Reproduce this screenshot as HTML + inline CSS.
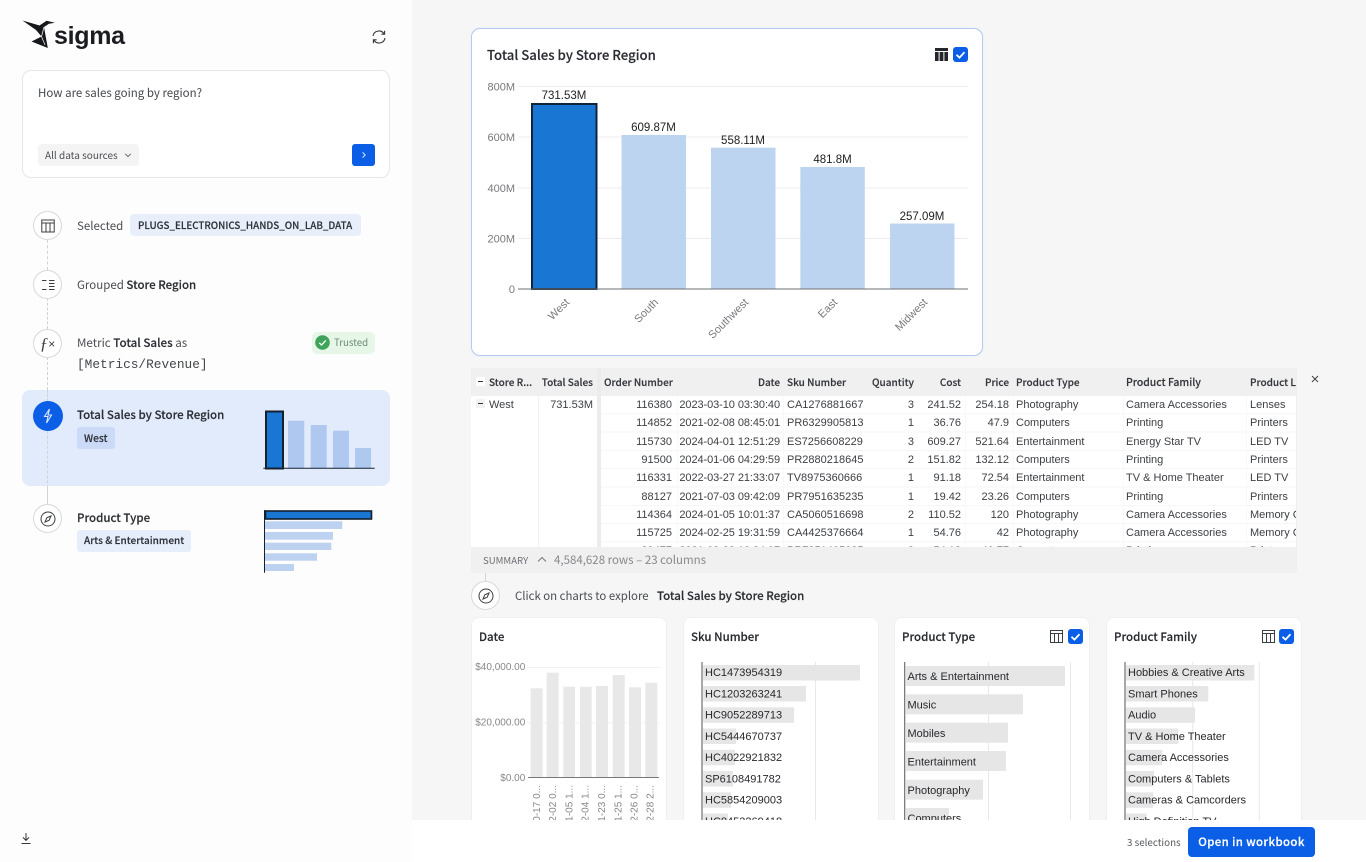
<!DOCTYPE html>
<html><head><meta charset="utf-8"><style>
*{box-sizing:border-box}
html,body{margin:0;padding:0;width:1366px;height:862px;overflow:hidden;background:#f6f6f6}
body{position:relative;font-family:"Noto Sans CJK JP","Liberation Sans",sans-serif;color:#3a3d42}
.a,.t,.r{position:absolute}
.t,.r{white-space:nowrap;line-height:16px}
.r{text-align:right}
.c{position:absolute;border-radius:50%;background:#fff;border:1px solid #d9d9d9;display:flex;align-items:center;justify-content:center}
.d{position:absolute;left:47px;width:0;border-left:1px dashed #d2d2d2}
b,.m{font-weight:500;color:#2a2d32;-webkit-text-stroke:.15px currentColor}
.tb .t,.tb .r{font-family:"Liberation Sans",sans-serif;font-size:11px;color:#3c3f44}
.tb .th{font-size:10px;font-weight:500;font-family:"Noto Sans CJK JP",sans-serif;color:#33363b;-webkit-text-stroke:.15px currentColor}
.tb .dt{letter-spacing:-.08px}
.card{position:absolute;background:#fff;border-radius:8px;top:617px;height:240px;border:1px solid #f0f0f0;overflow:hidden}
.h{font-size:11.5px;font-weight:500;color:#26292e;-webkit-text-stroke:.15px currentColor}
.v{position:absolute;top:396px;width:1px;height:151px;background:#f8f8f8}
</style></head><body>

<!-- sidebar -->
<div class="a" style="left:0;top:0;width:412px;height:862px;background:#fdfdfd"></div>
<svg class="a" style="left:0;top:0" width="60" height="60" viewBox="0 0 60 60"><path d="M22.5 20.5L39.5 25.5 46.5 20.8 55 22.8 49 23.8 44 27 47.8 48 31.5 41.5 41.5 36.5 36 30Z" fill="#17181c"/><path d="M44 27L41.5 36.5 45 45" stroke="#fff" stroke-width=".7" fill="none"/></svg>
<div class="t" style="left:54px;top:20px;font-family:'Liberation Sans',sans-serif;font-size:25px;line-height:32px;font-weight:700;color:#1c1d21;letter-spacing:-.3px">sigma</div>
<svg class="a" style="left:371px;top:29px" width="16" height="16" viewBox="0 0 16 16" fill="none" stroke="#33363b" stroke-width="1.1"><path d="M2 7A6 6 0 0 1 13 4.8"/><path d="M14 9A6 6 0 0 1 3 11.2"/><path d="M13.6 1.8V5.2H10.4"/><path d="M2.4 14.2V10.8H5.6"/></svg>

<div class="a" style="left:22px;top:70px;width:368px;height:108px;background:#fff;border:1px solid #e6e6e6;border-radius:9px"></div>
<div class="t" style="left:38px;top:84.5px;font-size:11.5px;color:#44474c">How are sales going by region?</div>
<div class="a" style="left:38px;top:144px;width:101px;height:22px;background:#f4f4f4;border-radius:4px"></div>
<div class="t" style="left:45px;top:147px;font-size:10px;color:#4a4d52">All data sources</div>
<svg class="a" style="left:124px;top:152px" width="8" height="7" viewBox="0 0 8 7" fill="none" stroke="#666" stroke-width="1"><path d="M1.2 1.8L4 4.6 6.8 1.8"/></svg>
<div class="a" style="left:352px;top:144px;width:23px;height:22px;background:#0a5fe6;border-radius:3px"></div>
<svg class="a" style="left:360px;top:151px" width="8" height="8" viewBox="0 0 8 8" fill="none" stroke="#d9e6ff" stroke-width="1"><path d="M2.6 1.4L5.2 4 2.6 6.6"/></svg>

<div class="d" style="top:240px;height:30px"></div>
<div class="d" style="top:298px;height:31px"></div>
<div class="d" style="top:357px;height:148px"></div>

<div class="c" style="left:33px;top:211px;width:29px;height:29px"><svg width="14" height="14" viewBox="0 0 14 14" fill="none" stroke="#3a3d42" stroke-width="1"><rect x=".8" y="1" width="12.4" height="12"/><path d="M.8 4H13.2M5 4V13M9 4V13"/></svg></div>
<div class="t" style="left:77px;top:217.5px;font-size:11.5px;color:#4a4d52">Selected</div>
<div class="a" style="left:130px;top:214px;width:231px;height:22px;background:#e8effb;border-radius:4px"></div>
<div class="t m" style="left:138px;top:217px;font-size:9.8px;color:#2e3238">PLUGS_ELECTRONICS_HANDS_ON_LAB_DATA</div>

<div class="c" style="left:33px;top:270px;width:29px;height:29px"><svg width="14" height="12" viewBox="0 0 14 12" fill="none" stroke="#3a3d42" stroke-width="1"><path d="M1 1.5H5.5M1 10.5H5.5M8 1.5H13.5M8 4.5H13.5M8 7.5H13.5M8 10.5H13.5"/></svg></div>
<div class="t" style="left:77px;top:276.5px;font-size:11.5px;color:#4a4d52">Grouped <b>Store Region</b></div>

<div class="c" style="left:33px;top:329px;width:29px;height:29px;font-family:'Liberation Serif',serif;font-style:italic;font-size:17px;color:#3a3d42">ƒ<span style="font-style:normal;font-size:12px;font-family:'Liberation Sans',sans-serif">×</span></div>
<div class="t" style="left:77px;top:334.5px;font-size:11.6px;color:#4a4d52">Metric <b>Total Sales</b> as</div>
<div class="t" style="left:77px;top:357px;font-family:'Liberation Mono',monospace;font-size:12.8px;color:#44474c">[Metrics/Revenue]</div>
<div class="a" style="left:312px;top:332px;width:63px;height:22px;background:#e6f7e8;border-radius:5px"></div>
<svg class="a" style="left:315px;top:335px" width="15" height="15" viewBox="0 0 15 15"><circle cx="7.5" cy="7.5" r="7.3" fill="#3fa35a"/><path d="M4.2 7.8L6.6 10 10.8 5.4" fill="none" stroke="#fff" stroke-width="1.3"/></svg>
<div class="t" style="left:334px;top:334px;font-size:9.7px;color:#6f8a75">Trusted</div>

<div class="a" style="left:22px;top:390px;width:368px;height:96px;background:#e2ebfc;border-radius:8px"></div>
<div class="d" style="top:390px;height:15px"></div>
<div class="d" style="top:431px;height:72px"></div>
<div class="a" style="left:33px;top:401px;width:30px;height:30px;border-radius:50%;background:#0a5fe6"></div>
<svg class="a" style="left:42px;top:408px" width="12" height="16" viewBox="0 0 12 16" fill="none" stroke="#dce8ff" stroke-width="1.1"><path d="M7.5 1L2.5 8.5H6L4.5 15 9.5 7H6Z"/></svg>
<div class="t m" style="left:77px;top:407px;font-size:11.5px">Total Sales by Store Region</div>
<div class="a" style="left:77px;top:427px;width:38px;height:22px;background:#cbdaf6;border-radius:3px"></div>
<div class="t m" style="left:84px;top:430px;font-size:10.2px;color:#2e3238">West</div>
<svg class="a" style="left:260px;top:405px" width="120" height="68" viewBox="260 405 120 68"><rect x="266" y="411.5" width="17" height="57" fill="#1976d2" stroke="#15202e" stroke-width="2"/><rect x="288" y="420.7" width="16.3" height="47.5" fill="#afc8ef"/><rect x="310.7" y="425" width="16" height="43.2" fill="#afc8ef"/><rect x="333" y="430.7" width="16" height="37.5" fill="#afc8ef"/><rect x="355" y="448" width="16" height="20.2" fill="#afc8ef"/><path d="M263.3 468.3H374.7" stroke="#15202e" stroke-width="1"/></svg>

<div class="c" style="left:33px;top:504px;width:29px;height:29px"><svg width="16" height="16" viewBox="0 0 16 16" fill="none" stroke="#3a3d42" stroke-width="1"><circle cx="8" cy="8" r="7"/><path d="M11 5L9.2 9.2 5 11 6.8 6.8Z"/></svg></div>
<div class="t m" style="left:77px;top:510px;font-size:11.5px">Product Type</div>
<div class="a" style="left:77px;top:530px;width:114px;height:22px;background:#e6edfb;border-radius:3px"></div>
<div class="t m" style="left:84px;top:532px;font-size:10px;color:#2e3238">Arts &amp; Entertainment</div>
<svg class="a" style="left:260px;top:505px" width="120" height="72" viewBox="260 505 120 72"><rect x="265.5" y="511" width="106" height="8" fill="#1976d2" stroke="#15202e" stroke-width="1.6"/><g fill="#bdd1f0"><rect x="265" y="521.3" width="77.3" height="7.7"/><rect x="265" y="532" width="68" height="7.7"/><rect x="265" y="542.7" width="66.3" height="7.3"/><rect x="265" y="553.3" width="52" height="7.4"/><rect x="265" y="564" width="29" height="7"/></g><path d="M264.5 510V572.7" stroke="#15202e" stroke-width="1"/></svg>

<svg class="a" style="left:20px;top:832px" width="12" height="13" viewBox="0 0 12 13" fill="none" stroke="#33363b" stroke-width="1"><path d="M6 1V8M3 5.4L6 8.4 9 5.4M1.5 11.5H10.5"/></svg>

<!-- main chart -->
<div class="a" style="left:471px;top:28px;width:512px;height:328px;background:#fff;border:1.5px solid #b4c9ee;border-radius:9px;box-shadow:0 0 2px #e6edf9"></div>
<div class="t m" style="left:487px;top:47px;font-size:13.2px">Total Sales by Store Region</div>
<svg class="a" style="left:935px;top:47px" width="33" height="15" viewBox="0 0 33 15"><rect x="0" y="1" width="13" height="3" fill="#24262b"/><path d="M0 5H3.6V14H0ZM4.6 5H8.4V14H4.6ZM9.4 5H13V14H9.4Z" fill="#24262b"/><rect x="18" y="0" width="15" height="15" rx="3" fill="#0a5fe6"/><path d="M21.5 7.8L24.5 10.6 29.5 5.2" fill="none" stroke="#fff" stroke-width="1.8"/></svg>
<svg class="a" style="left:471px;top:70px;font-family:'Liberation Sans',sans-serif" width="512" height="280" viewBox="471 70 512 280">
<g stroke="#ececec" stroke-width="1"><path d="M518 86.5H968M518 137H968M518 188H968M518 238.5H968"/></g>
<g font-size="11" fill="#77797d" text-anchor="end"><text x="515" y="90.5">800M</text><text x="515" y="141">600M</text><text x="515" y="192">400M</text><text x="515" y="242.5">200M</text><text x="515" y="293">0</text></g>
<rect x="532" y="104" width="64.5" height="185" fill="#1976d2" stroke="#10243c" stroke-width="2"/>
<g fill="#bcd4f0"><rect x="621.5" y="135" width="64.5" height="154"/><rect x="711" y="147.7" width="64.5" height="141.3"/><rect x="800.3" y="167" width="64.5" height="122"/><rect x="890" y="223.5" width="64.5" height="65.5"/></g>
<path d="M518 289H968" stroke="#6e7176" stroke-width="1"/>
<g font-size="11.5" fill="#222" text-anchor="middle"><text x="564" y="99">731.53M</text><text x="653.5" y="131">609.87M</text><text x="743" y="144">558.11M</text><text x="832.5" y="163">481.8M</text><text x="922" y="220">257.09M</text></g>
<g font-size="11" fill="#77797d" text-anchor="end"><text transform="translate(570 303) rotate(-45)">West</text><text transform="translate(659 303) rotate(-45)">South</text><text transform="translate(749 303) rotate(-45)">Southwest</text><text transform="translate(838 303) rotate(-45)">East</text><text transform="translate(928 303) rotate(-45)">Midwest</text></g>
</svg>

<!-- table -->
<div class="a" style="left:471px;top:368px;width:826px;height:205px;background:#f0f0f0"></div>
<div class="a" style="left:471px;top:396px;width:825px;height:151px;background:#fff;overflow:hidden"></div>
<div class="a tb" style="left:0;top:0;width:1296px;height:547px;overflow:hidden">
<div style="position:absolute;left:601px;top:396px;width:695px;height:151px;background:repeating-linear-gradient(#fff 0,#fff 17.3px,#f6f6f6 17.3px,#f6f6f6 18.3px)"></div>
<div class="v" style="left:677px"></div><div class="v" style="left:783px"></div><div class="v" style="left:965px"></div><div class="v" style="left:1013px"></div><div class="v" style="left:1123px"></div><div class="v" style="left:1246px"></div>
<div class="t th" style="left:489px;top:373.5px">Store R...</div><div class="r th" style="right:703px;top:373.5px">Total Sales</div>
<div class="t th" style="left:604px;top:373.5px">Order Number</div><div class="r th" style="right:516px;top:373.5px">Date</div><div class="t th" style="left:787px;top:373.5px">Sku Number</div><div class="r th" style="right:382px;top:373.5px">Quantity</div><div class="r th" style="right:335px;top:373.5px">Cost</div><div class="r th" style="right:287px;top:373.5px">Price</div><div class="t th" style="left:1016px;top:373.5px">Product Type</div><div class="t th" style="left:1126px;top:373.5px;font-size:10.4px">Product Family</div><div class="t th" style="left:1250px;top:373.5px">Product L</div>
<div class="t" style="left:489px;top:397px">West</div><div class="r" style="right:703px;top:397px">731.53M</div>
<div class="r" style="right:624px;top:397px">116380</div><div class="r dt" style="right:516px;top:397px">2023-03-10 03:30:40</div><div class="t" style="left:787px;top:397px">CA1276881667</div><div class="r" style="right:382px;top:397px">3</div><div class="r" style="right:335px;top:397px">241.52</div><div class="r" style="right:287px;top:397px">254.18</div><div class="t" style="left:1016px;top:397px">Photography</div><div class="t" style="left:1126px;top:397px">Camera Accessories</div><div class="t" style="left:1250px;top:397px">Lenses</div>
<div class="r" style="right:624px;top:415.3px">114852</div><div class="r dt" style="right:516px;top:415.3px">2021-02-08 08:45:01</div><div class="t" style="left:787px;top:415.3px">PR6329905813</div><div class="r" style="right:382px;top:415.3px">1</div><div class="r" style="right:335px;top:415.3px">36.76</div><div class="r" style="right:287px;top:415.3px">47.9</div><div class="t" style="left:1016px;top:415.3px">Computers</div><div class="t" style="left:1126px;top:415.3px">Printing</div><div class="t" style="left:1250px;top:415.3px">Printers</div>
<div class="r" style="right:624px;top:433.6px">115730</div><div class="r dt" style="right:516px;top:433.6px">2024-04-01 12:51:29</div><div class="t" style="left:787px;top:433.6px">ES7256608229</div><div class="r" style="right:382px;top:433.6px">3</div><div class="r" style="right:335px;top:433.6px">609.27</div><div class="r" style="right:287px;top:433.6px">521.64</div><div class="t" style="left:1016px;top:433.6px">Entertainment</div><div class="t" style="left:1126px;top:433.6px">Energy Star TV</div><div class="t" style="left:1250px;top:433.6px">LED TV</div>
<div class="r" style="right:624px;top:451.9px">91500</div><div class="r dt" style="right:516px;top:451.9px">2024-01-06 04:29:59</div><div class="t" style="left:787px;top:451.9px">PR2880218645</div><div class="r" style="right:382px;top:451.9px">2</div><div class="r" style="right:335px;top:451.9px">151.82</div><div class="r" style="right:287px;top:451.9px">132.12</div><div class="t" style="left:1016px;top:451.9px">Computers</div><div class="t" style="left:1126px;top:451.9px">Printing</div><div class="t" style="left:1250px;top:451.9px">Printers</div>
<div class="r" style="right:624px;top:470.2px">116331</div><div class="r dt" style="right:516px;top:470.2px">2022-03-27 21:33:07</div><div class="t" style="left:787px;top:470.2px">TV8975360666</div><div class="r" style="right:382px;top:470.2px">1</div><div class="r" style="right:335px;top:470.2px">91.18</div><div class="r" style="right:287px;top:470.2px">72.54</div><div class="t" style="left:1016px;top:470.2px">Entertainment</div><div class="t" style="left:1126px;top:470.2px">TV &amp; Home Theater</div><div class="t" style="left:1250px;top:470.2px">LED TV</div>
<div class="r" style="right:624px;top:488.5px">88127</div><div class="r dt" style="right:516px;top:488.5px">2021-07-03 09:42:09</div><div class="t" style="left:787px;top:488.5px">PR7951635235</div><div class="r" style="right:382px;top:488.5px">1</div><div class="r" style="right:335px;top:488.5px">19.42</div><div class="r" style="right:287px;top:488.5px">23.26</div><div class="t" style="left:1016px;top:488.5px">Computers</div><div class="t" style="left:1126px;top:488.5px">Printing</div><div class="t" style="left:1250px;top:488.5px">Printers</div>
<div class="r" style="right:624px;top:506.8px">114364</div><div class="r dt" style="right:516px;top:506.8px">2024-01-05 10:01:37</div><div class="t" style="left:787px;top:506.8px">CA5060516698</div><div class="r" style="right:382px;top:506.8px">2</div><div class="r" style="right:335px;top:506.8px">110.52</div><div class="r" style="right:287px;top:506.8px">120</div><div class="t" style="left:1016px;top:506.8px">Photography</div><div class="t" style="left:1126px;top:506.8px">Camera Accessories</div><div class="t" style="left:1250px;top:506.8px">Memory Cards</div>
<div class="r" style="right:624px;top:525.1px">115725</div><div class="r dt" style="right:516px;top:525.1px">2024-02-25 19:31:59</div><div class="t" style="left:787px;top:525.1px">CA4425376664</div><div class="r" style="right:382px;top:525.1px">1</div><div class="r" style="right:335px;top:525.1px">54.76</div><div class="r" style="right:287px;top:525.1px">42</div><div class="t" style="left:1016px;top:525.1px">Photography</div><div class="t" style="left:1126px;top:525.1px">Camera Accessories</div><div class="t" style="left:1250px;top:525.1px">Memory Cards</div>
<div class="r" style="right:624px;top:543.4px">89477</div><div class="r dt" style="right:516px;top:543.4px">2021-03-23 10:24:07</div><div class="t" style="left:787px;top:543.4px">PR7351405085</div><div class="r" style="right:382px;top:543.4px">2</div><div class="r" style="right:335px;top:543.4px">54.18</div><div class="r" style="right:287px;top:543.4px">40.77</div><div class="t" style="left:1016px;top:543.4px">Computers</div><div class="t" style="left:1126px;top:543.4px">Printing</div><div class="t" style="left:1250px;top:543.4px">Printers</div>
</div>
<div class="a" style="left:597px;top:368px;width:4px;height:179px;background:#ececec"></div>
<div class="a" style="left:538px;top:396px;width:1px;height:151px;background:#f2f2f2"></div>
<div class="a" style="left:476px;top:377px;width:9px;height:9px;background:#fff;border-radius:1px"></div>
<div class="a" style="left:478px;top:381px;width:5px;height:1px;background:#333"></div>
<div class="a" style="left:476px;top:399px;width:9px;height:9px;background:#f2f2f2;border-radius:1px"></div>
<div class="a" style="left:478px;top:403px;width:5px;height:1px;background:#333"></div>
<div class="t" style="left:483px;top:552px;font-size:9.6px;color:#6d7075">SUMMARY</div>
<svg class="a" style="left:537px;top:556px" width="10" height="7" viewBox="0 0 10 7" fill="none" stroke="#777" stroke-width="1"><path d="M1 5.5L5 1.5 9 5.5"/></svg>
<div class="t" style="left:554px;top:552px;font-size:11.5px;color:#85888c">4,584,628 rows – 23 columns</div>
<svg class="a" style="left:1310px;top:374px" width="10" height="10" viewBox="0 0 10 10" stroke="#444" stroke-width="1"><path d="M2 2L8 8M8 2L2 8"/></svg>

<!-- explore -->
<div class="a" style="left:485px;top:573px;width:1px;height:8px;background:#d5d5d5"></div>
<div class="c" style="left:471px;top:581px;width:29px;height:29px"><svg width="16" height="16" viewBox="0 0 16 16" fill="none" stroke="#3a3d42" stroke-width="1"><circle cx="8" cy="8" r="7"/><path d="M11 5L9.2 9.2 5 11 6.8 6.8Z"/></svg></div>
<div class="t" style="left:515px;top:588px;font-size:11.4px;color:#4a4d52">Click on charts to explore</div>
<div class="t m" style="left:657px;top:588px;font-size:11.5px">Total Sales by Store Region</div>

<!-- cards -->
<div class="card" style="left:471px;width:196px"></div>
<div class="card" style="left:683px;width:196px"></div>
<div class="card" style="left:894px;width:196px"></div>
<div class="card" style="left:1106px;width:196px"></div>
<div class="t h" style="left:479px;top:629px">Date</div>
<div class="t h" style="left:691px;top:629px">Sku Number</div>
<div class="t h" style="left:902px;top:629px">Product Type</div>
<div class="t h" style="left:1114px;top:629px">Product Family</div>
<svg class="a" style="left:1050px;top:629px" width="33" height="15" viewBox="0 0 33 15"><g fill="none" stroke="#3a3d42" stroke-width="1"><rect x=".5" y="1.5" width="12" height="12"/><path d="M.5 4.5H12.5M4.5 4.5V13.5M8.5 4.5V13.5"/></g><rect x="18" y="0" width="15" height="15" rx="3" fill="#0a5fe6"/><path d="M21.5 7.8L24.5 10.6 29.5 5.2" fill="none" stroke="#fff" stroke-width="1.8"/></svg>
<svg class="a" style="left:1262px;top:629px" width="33" height="15" viewBox="0 0 33 15"><g fill="none" stroke="#3a3d42" stroke-width="1"><rect x=".5" y="1.5" width="12" height="12"/><path d="M.5 4.5H12.5M4.5 4.5V13.5M8.5 4.5V13.5"/></g><rect x="17" y="0" width="15" height="15" rx="3" fill="#0a5fe6"/><path d="M20.5 7.8L23.5 10.6 28.5 5.2" fill="none" stroke="#fff" stroke-width="1.8"/></svg>

<svg class="a" style="left:471px;top:655px;font-family:'Liberation Sans',sans-serif" width="840" height="170" viewBox="471 655 840 170">
<!-- date -->
<path d="M527 667.5H660M527 722.7H660" stroke="#f2f2f2"/>
<g fill="#e8e8e8"><rect x="530.7" y="688.3" width="12" height="89"/><rect x="546.7" y="672.7" width="12" height="104.6"/><rect x="563.3" y="686.7" width="11.7" height="90.6"/><rect x="580" y="686.7" width="11.7" height="90.6"/><rect x="596" y="686" width="12" height="91.3"/><rect x="612.7" y="675" width="12" height="102.3"/><rect x="629" y="687.3" width="12" height="90"/><rect x="645.3" y="682.7" width="12" height="94.6"/></g>
<path d="M528 777.5H659" stroke="#777"/>
<g font-size="10" fill="#85878a" text-anchor="end"><text x="525.3" y="670">$40,000.00</text><text x="525.3" y="725.5">$20,000.00</text><text x="525.3" y="781">$0.00</text></g>
<g font-size="10" fill="#85878a" text-anchor="end"><text transform="translate(540 785) rotate(-90)">10-17 0...</text><text transform="translate(556 785) rotate(-90)">12-02 0...</text><text transform="translate(572.5 785) rotate(-90)">01-05 1...</text><text transform="translate(588.5 785) rotate(-90)">02-04 1...</text><text transform="translate(605 785) rotate(-90)">01-23 0...</text><text transform="translate(621.5 785) rotate(-90)">01-25 1...</text><text transform="translate(637.5 785) rotate(-90)">02-26 0...</text><text transform="translate(653.5 785) rotate(-90)">02-28 2...</text></g>
<!-- sku -->
<path d="M815.5 662V820" stroke="#e8e8e8"/>
<g fill="#e6e6e6"><rect x="703" y="665" width="157" height="15.5"/><rect x="703" y="686" width="103" height="15.5"/><rect x="703" y="707.3" width="91" height="15.5"/><rect x="703" y="728.5" width="33" height="15.5"/><rect x="703" y="749.8" width="32" height="15.5"/><rect x="703" y="771" width="30" height="15.5"/><rect x="703" y="792.3" width="28" height="15.5"/><rect x="703" y="813.5" width="25" height="15.5"/></g>
<path d="M702 662V820" stroke="#6b6e72" stroke-width="1.2"/>
<g font-size="11" fill="#26282c"><text x="705" y="676">HC1473954319</text><text x="705" y="697.3">HC1203263241</text><text x="705" y="718.5">HC9052289713</text><text x="705" y="739.8">HC5444670737</text><text x="705" y="761">HC4022921832</text><text x="705" y="782.3">SP6108491782</text><text x="705" y="803.5">HC5854209003</text><text x="705" y="824.8">HC8453269418</text></g>
<!-- type -->
<path d="M988.5 662V820M1070.5 662V820" stroke="#e8e8e8"/>
<g fill="#e6e6e6"><rect x="906" y="666" width="159" height="20"/><rect x="906" y="694.3" width="117" height="20"/><rect x="906" y="722.7" width="102" height="20"/><rect x="906" y="751" width="100" height="20"/><rect x="906" y="779.7" width="77" height="20"/><rect x="906" y="808" width="43" height="20"/></g>
<path d="M904.7 662V820" stroke="#6b6e72" stroke-width="1.2"/>
<g font-size="11" fill="#26282c"><text x="907.5" y="680">Arts &amp; Entertainment</text><text x="907.5" y="708.3">Music</text><text x="907.5" y="737">Mobiles</text><text x="907.5" y="765.3">Entertainment</text><text x="907.5" y="794">Photography</text><text x="907.5" y="822">Computers</text></g>
<!-- family -->
<path d="M1192.7 662V820M1259.3 662V820" stroke="#e8e8e8"/>
<g fill="#e6e6e6"><rect x="1126" y="665" width="128.3" height="15.5"/><rect x="1126" y="686" width="82.3" height="15.5"/><rect x="1126" y="707.3" width="69" height="15.5"/><rect x="1126" y="728.5" width="52.3" height="15.5"/><rect x="1126" y="749.8" width="36.3" height="15.5"/><rect x="1126" y="771" width="28" height="15.5"/><rect x="1126" y="792.3" width="27.3" height="15.5"/><rect x="1126" y="813.5" width="20.7" height="15.5"/></g>
<path d="M1125 662V820" stroke="#6b6e72" stroke-width="1.2"/>
<g font-size="11" fill="#26282c"><text x="1128" y="676">Hobbies &amp; Creative Arts</text><text x="1128" y="697.3">Smart Phones</text><text x="1128" y="718.5">Audio</text><text x="1128" y="739.8">TV &amp; Home Theater</text><text x="1128" y="761">Camera Accessories</text><text x="1128" y="782.3">Computers &amp; Tablets</text><text x="1128" y="803.5">Cameras &amp; Camcorders</text><text x="1128" y="824.8">High Definition TV</text></g>
</svg>

<!-- bottom bar -->
<div class="a" style="left:412px;top:820px;width:954px;height:42px;background:#fff"></div>
<div class="t" style="left:1127px;top:834px;font-size:9.8px;color:#55585c">3 selections</div>
<div class="a" style="left:1188px;top:827px;width:127px;height:30px;background:#0a5fe6;border-radius:4px;color:#fff;font-size:11.4px;font-weight:500;line-height:30px;text-align:center;letter-spacing:.4px;-webkit-text-stroke:.2px #fff">Open in workbook</div>
</body></html>
